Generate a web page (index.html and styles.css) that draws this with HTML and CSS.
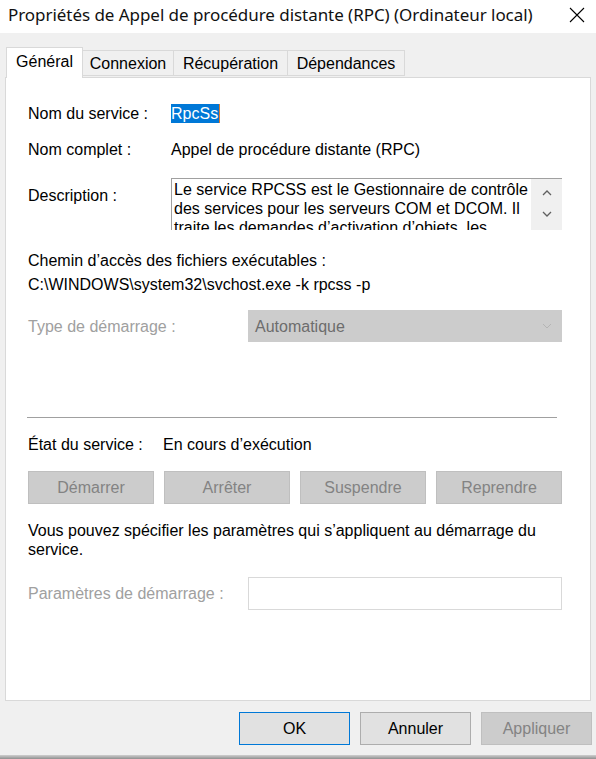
FILE: index.html
```html
<!DOCTYPE html>
<html lang="fr">
<head>
<meta charset="utf-8">
<title>Propriétés</title>
<link rel="stylesheet" href="styles.css">
</head>
<body>
<div class="window">
  <div class="titlebar">
    <span class="title">Propriétés de Appel de procédure distante (RPC) (Ordinateur local)</span>
    <svg class="close" width="16" height="16" viewBox="0 0 16 16"><path d="M1 1L15 15M15 1L1 15" stroke="#000" stroke-width="1.1" fill="none"/></svg>
  </div>
  <div class="body">
    <div class="tabs">
      <div class="tab active">Général</div>
      <div class="tab w-conn">Connexion</div>
      <div class="tab w-rec">Récupération</div>
      <div class="tab w-dep">Dépendances</div>
    </div>
    <div class="panel">
      <div class="row r1">
        <span class="label">Nom du service :</span>
        <span class="value"><span class="sel">RpcSs</span></span>
      </div>
      <div class="row r2">
        <span class="label">Nom complet :</span>
        <span class="value">Appel de procédure distante (RPC)</span>
      </div>
      <div class="row r3">
        <span class="label desc-label">Description :</span>
        <div class="textbox">
          <div class="textbox-text">Le service RPCSS est le Gestionnaire de contrôle des services pour les serveurs COM et DCOM. Il traite les demandes d’activation d’objets, les</div>
          <div class="scroll">
            <svg width="12" height="8" viewBox="0 0 12 8"><path d="M2 6L6 2L10 6" stroke="#606060" stroke-width="1.3" fill="none"/></svg>
            <svg width="12" height="8" viewBox="0 0 12 8"><path d="M2 2L6 6L10 2" stroke="#606060" stroke-width="1.3" fill="none"/></svg>
          </div>
        </div>
      </div>
      <div class="line r4">Chemin d’accès des fichiers exécutables :</div>
      <div class="line r5">C:\WINDOWS\system32\svchost.exe -k rpcss -p</div>
      <div class="row r6">
        <span class="label dis wide">Type de démarrage :</span>
        <div class="combo">
          <span>Automatique</span>
          <svg width="12" height="8" viewBox="0 0 12 8"><path d="M2 2L6 6L10 2" stroke="#b4b4b4" stroke-width="1" fill="none"/></svg>
        </div>
      </div>
      <div class="sep"></div>
      <div class="row r7">
        <span class="label state">État du service :</span>
        <span>En cours d’exécution</span>
      </div>
      <div class="btnrow">
        <div class="btn disabled">Démarrer</div>
        <div class="btn disabled">Arrêter</div>
        <div class="btn disabled">Suspendre</div>
        <div class="btn disabled">Reprendre</div>
      </div>
      <div class="para">Vous pouvez spécifier les paramètres qui s’appliquent au démarrage du service.</div>
      <div class="row r8">
        <span class="label dis wide">Paramètres de démarrage :</span>
        <div class="input"></div>
      </div>
    </div>
    <div class="footer">
      <div class="btn dlg default">OK</div>
      <div class="btn dlg">Annuler</div>
      <div class="btn dlg disabled">Appliquer</div>
    </div>
  </div>
  <div class="shadow"></div>
</div>
</body>
</html>
```
FILE: styles.css
```css
* { box-sizing: border-box; }
html, body { margin: 0; padding: 0; }
body {
  width: 596px;
  height: 759px;
  overflow: hidden;
  background: #f0f0f0;
  font-family: "Liberation Sans", Arial, sans-serif;
  font-size: 16px;
  color: #000;
}
.window { width: 596px; height: 759px; display: flex; flex-direction: column; }
.titlebar {
  height: 33px;
  background: #fff;
  display: flex;
  align-items: center;
  justify-content: space-between;
  padding: 0 11px 4px 8px;
}
.title {
  font-family: "Noto Sans", sans-serif;
  font-size: 17px;
  color: #111;
  letter-spacing: -0.05px;
}
.close { display: block; }
.body { flex: 1; padding: 14px 5px 0 5px; display: flex; flex-direction: column; }
.tabs { display: flex; align-items: flex-end; height: 30px; padding-left: 1px; position: relative; z-index: 1; }
.tab {
  height: 26px;
  border: 1px solid #d9d9d9;
  border-left: none;
  background: #f0f0f0;
  display: flex;
  align-items: center;
  justify-content: center;
  margin-bottom: 1px;
  padding-top: 1px;
}
.tab.active {
  height: 31px;
  width: 77px;
  background: #fff;
  border-left: 1px solid #d9d9d9;
  border-bottom: none;
  margin-bottom: -1px;
  padding-bottom: 4px;
}
.w-conn { width: 91px; }
.w-rec { width: 114px; }
.w-dep { width: 117px; }
.panel {
  height: 624px;
  background: #fff;
  border: 1px solid #d9d9d9;
  padding: 0 0 0 22px;
  display: flex;
  flex-direction: column;
}
.row { display: flex; align-items: center; line-height: 19px; }
.label { width: 143px; flex: none; }
.label.wide { width: 220px; }
.label.state { width: 135px; }
.dis { color: #a0a0a0; }
.r1 { margin-top: 26px; }
.sel { background: #0078d7; color: #fff; display: inline-block; padding-right: 1px; border-right: 1px solid #e07a2c; }
.r2 { margin-top: 17px; }
.r3 { margin-top: 19px; align-items: flex-start; }
.desc-label { margin-top: 8px; }
.textbox {
  width: 391px;
  height: 52px;
  border-top: 1px solid #a0a0a0;
  border-left: 1px solid #a0a0a0;
  display: flex;
  overflow: hidden;
}
.textbox-text { flex: 1; padding: 1px 0 0 2px; line-height: 19px; height: 51px; overflow: hidden; }
.scroll {
  width: 31px;
  background: #f0f0f0;
  display: flex;
  flex-direction: column;
  align-items: center;
  padding-top: 10px;
  gap: 13px;
}
.scroll svg { display: block; }
.line { line-height: 19px; }
.r4 { margin-top: 21px; }
.r5 { margin-top: 5px; }
.r6 { margin-top: 16px; }
.combo {
  width: 314px;
  height: 32px;
  background: #cccccc;
  border: 1px solid #cccccc;
  color: #6d6d6d;
  display: flex;
  align-items: center;
  justify-content: space-between;
  padding: 0 8px 0 6px;
}
.sep { margin: 75px 0 0 -1px; width: 530px; height: 1px; background: #a0a0a0; }
.r7 { margin-top: 17px; }
.btnrow { margin-top: 17px; display: grid; grid-template-columns: repeat(4, 126px); gap: 10px; }
.btn {
  height: 33px;
  display: flex;
  align-items: center;
  justify-content: center;
  border: 1px solid #adadad;
  background: #e1e1e1;
}
.btn.disabled { background: #cccccc; border-color: #bfbfbf; color: #838383; }
.para { margin-top: 17px; line-height: 19px; width: 540px; }
.r8 { margin-top: 18px; }
.input { width: 314px; height: 33px; border: 1px solid #d9d9d9; background: #fff; }
.footer { display: flex; justify-content: flex-end; gap: 10px; margin-top: 11px; padding-right: 0; margin-right: -1px; }
.dlg { width: 111px; }
.btn.default { border-color: #0078d7; }
.shadow { height: 4px; background: linear-gradient(#cfcfcf, #8f8f8f); margin-top: auto; }
```
